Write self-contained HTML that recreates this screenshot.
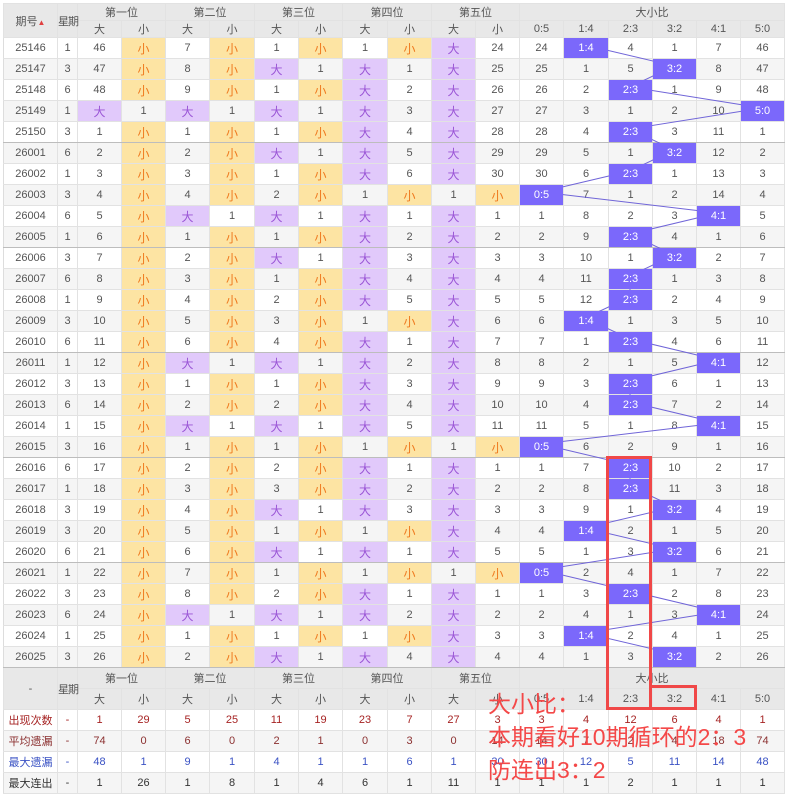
<!DOCTYPE html>
<html><head><meta charset="utf-8"><style>
body{margin:0;background:#fff;width:786px;height:793px;overflow:hidden;position:relative;font-family:"Liberation Sans","Noto Sans CJK SC",sans-serif;}
table{position:absolute;left:3px;top:3px;border-collapse:collapse;table-layout:fixed;width:781px;font-size:11px;color:#555;}
td{border:1px solid #e2e2e2;text-align:center;padding:0;height:20px;white-space:nowrap;overflow:hidden;}
td.wk{overflow:visible;letter-spacing:-1px;}
tr.h td{background:#e8e8e8;color:#555;}
tr.h1 td{height:16px;}
tr.h2 td{height:14px;}
tr.f1 td,tr.f2 td{height:20px;}
tr:nth-child(even).d td{background:#f5f5f5;}
tr.d td:nth-child(2),tr.d td:nth-child(3),tr.d td:nth-child(5),tr.d td:nth-child(7),tr.d td:nth-child(9),tr.d td:nth-child(11),tr.d td:nth-child(13){border-left:1px solid #c4c4c4;}
tr.d td:first-child{border-left:1px solid #ddd}
tr.g td{border-bottom:1px solid #bdbdbd;}
.gl{border-left:1px solid #c4c4c4!important;}
tr.d td.p{background:#e1c9fb!important;color:#9a55d6;font-size:12px;}
tr.d td.y{background:#fde4a3!important;color:#ef7a1f;font-size:12px;}
tr.d td.b{background:#7b68fb!important;color:#fff;position:relative;z-index:2;}
tr.s td{height:20px;}
.r1{color:#a62323}.r2{color:#8b3030}.r3{color:#3a52c4}.r4{color:#333}
svg{position:absolute;left:0;top:0;z-index:1;}
.box{position:absolute;border:3px solid #f04848;z-index:3;}
.note{position:absolute;left:488px;top:688px;color:#f44848;font-size:23px;line-height:33px;z-index:3;font-family:"Liberation Sans","Noto Sans CJK SC",sans-serif;}
</style></head><body>
<table>
<colgroup><col style="width:54px"><col style="width:20px"><col style="width:44px"><col style="width:44px"><col style="width:44px"><col style="width:45px"><col style="width:44px"><col style="width:44px"><col style="width:45px"><col style="width:44px"><col style="width:44px"><col style="width:44px"><col style="width:44px"><col style="width:45px"><col style="width:44px"><col style="width:44px"><col style="width:44px"><col style="width:44px"></colgroup>
<tr class="h h1"><td rowspan="2">期号<span style="color:#e04040;font-size:8px">▲</span></td><td rowspan="2" class="gl wk">星期</td><td colspan="2" class="gl">第一位</td><td colspan="2" class="gl">第二位</td><td colspan="2" class="gl">第三位</td><td colspan="2" class="gl">第四位</td><td colspan="2" class="gl">第五位</td><td colspan="6" class="gl">大小比</td></tr>
<tr class="h h2"><td class="gl">大</td><td>小</td><td class="gl">大</td><td>小</td><td class="gl">大</td><td>小</td><td class="gl">大</td><td>小</td><td class="gl">大</td><td>小</td><td class="gl">0:5</td><td>1:4</td><td>2:3</td><td>3:2</td><td>4:1</td><td>5:0</td></tr>
<tr class="d"><td>25146</td><td>1</td><td>46</td><td class="y">小</td><td>7</td><td class="y">小</td><td>1</td><td class="y">小</td><td>1</td><td class="y">小</td><td class="p">大</td><td>24</td><td>24</td><td class="b">1:4</td><td>4</td><td>1</td><td>7</td><td>46</td></tr>
<tr class="d"><td>25147</td><td>3</td><td>47</td><td class="y">小</td><td>8</td><td class="y">小</td><td class="p">大</td><td>1</td><td class="p">大</td><td>1</td><td class="p">大</td><td>25</td><td>25</td><td>1</td><td>5</td><td class="b">3:2</td><td>8</td><td>47</td></tr>
<tr class="d"><td>25148</td><td>6</td><td>48</td><td class="y">小</td><td>9</td><td class="y">小</td><td>1</td><td class="y">小</td><td class="p">大</td><td>2</td><td class="p">大</td><td>26</td><td>26</td><td>2</td><td class="b">2:3</td><td>1</td><td>9</td><td>48</td></tr>
<tr class="d"><td>25149</td><td>1</td><td class="p">大</td><td>1</td><td class="p">大</td><td>1</td><td class="p">大</td><td>1</td><td class="p">大</td><td>3</td><td class="p">大</td><td>27</td><td>27</td><td>3</td><td>1</td><td>2</td><td>10</td><td class="b">5:0</td></tr>
<tr class="d g"><td>25150</td><td>3</td><td>1</td><td class="y">小</td><td>1</td><td class="y">小</td><td>1</td><td class="y">小</td><td class="p">大</td><td>4</td><td class="p">大</td><td>28</td><td>28</td><td>4</td><td class="b">2:3</td><td>3</td><td>11</td><td>1</td></tr>
<tr class="d"><td>26001</td><td>6</td><td>2</td><td class="y">小</td><td>2</td><td class="y">小</td><td class="p">大</td><td>1</td><td class="p">大</td><td>5</td><td class="p">大</td><td>29</td><td>29</td><td>5</td><td>1</td><td class="b">3:2</td><td>12</td><td>2</td></tr>
<tr class="d"><td>26002</td><td>1</td><td>3</td><td class="y">小</td><td>3</td><td class="y">小</td><td>1</td><td class="y">小</td><td class="p">大</td><td>6</td><td class="p">大</td><td>30</td><td>30</td><td>6</td><td class="b">2:3</td><td>1</td><td>13</td><td>3</td></tr>
<tr class="d"><td>26003</td><td>3</td><td>4</td><td class="y">小</td><td>4</td><td class="y">小</td><td>2</td><td class="y">小</td><td>1</td><td class="y">小</td><td>1</td><td class="y">小</td><td class="b">0:5</td><td>7</td><td>1</td><td>2</td><td>14</td><td>4</td></tr>
<tr class="d"><td>26004</td><td>6</td><td>5</td><td class="y">小</td><td class="p">大</td><td>1</td><td class="p">大</td><td>1</td><td class="p">大</td><td>1</td><td class="p">大</td><td>1</td><td>1</td><td>8</td><td>2</td><td>3</td><td class="b">4:1</td><td>5</td></tr>
<tr class="d g"><td>26005</td><td>1</td><td>6</td><td class="y">小</td><td>1</td><td class="y">小</td><td>1</td><td class="y">小</td><td class="p">大</td><td>2</td><td class="p">大</td><td>2</td><td>2</td><td>9</td><td class="b">2:3</td><td>4</td><td>1</td><td>6</td></tr>
<tr class="d"><td>26006</td><td>3</td><td>7</td><td class="y">小</td><td>2</td><td class="y">小</td><td class="p">大</td><td>1</td><td class="p">大</td><td>3</td><td class="p">大</td><td>3</td><td>3</td><td>10</td><td>1</td><td class="b">3:2</td><td>2</td><td>7</td></tr>
<tr class="d"><td>26007</td><td>6</td><td>8</td><td class="y">小</td><td>3</td><td class="y">小</td><td>1</td><td class="y">小</td><td class="p">大</td><td>4</td><td class="p">大</td><td>4</td><td>4</td><td>11</td><td class="b">2:3</td><td>1</td><td>3</td><td>8</td></tr>
<tr class="d"><td>26008</td><td>1</td><td>9</td><td class="y">小</td><td>4</td><td class="y">小</td><td>2</td><td class="y">小</td><td class="p">大</td><td>5</td><td class="p">大</td><td>5</td><td>5</td><td>12</td><td class="b">2:3</td><td>2</td><td>4</td><td>9</td></tr>
<tr class="d"><td>26009</td><td>3</td><td>10</td><td class="y">小</td><td>5</td><td class="y">小</td><td>3</td><td class="y">小</td><td>1</td><td class="y">小</td><td class="p">大</td><td>6</td><td>6</td><td class="b">1:4</td><td>1</td><td>3</td><td>5</td><td>10</td></tr>
<tr class="d g"><td>26010</td><td>6</td><td>11</td><td class="y">小</td><td>6</td><td class="y">小</td><td>4</td><td class="y">小</td><td class="p">大</td><td>1</td><td class="p">大</td><td>7</td><td>7</td><td>1</td><td class="b">2:3</td><td>4</td><td>6</td><td>11</td></tr>
<tr class="d"><td>26011</td><td>1</td><td>12</td><td class="y">小</td><td class="p">大</td><td>1</td><td class="p">大</td><td>1</td><td class="p">大</td><td>2</td><td class="p">大</td><td>8</td><td>8</td><td>2</td><td>1</td><td>5</td><td class="b">4:1</td><td>12</td></tr>
<tr class="d"><td>26012</td><td>3</td><td>13</td><td class="y">小</td><td>1</td><td class="y">小</td><td>1</td><td class="y">小</td><td class="p">大</td><td>3</td><td class="p">大</td><td>9</td><td>9</td><td>3</td><td class="b">2:3</td><td>6</td><td>1</td><td>13</td></tr>
<tr class="d"><td>26013</td><td>6</td><td>14</td><td class="y">小</td><td>2</td><td class="y">小</td><td>2</td><td class="y">小</td><td class="p">大</td><td>4</td><td class="p">大</td><td>10</td><td>10</td><td>4</td><td class="b">2:3</td><td>7</td><td>2</td><td>14</td></tr>
<tr class="d"><td>26014</td><td>1</td><td>15</td><td class="y">小</td><td class="p">大</td><td>1</td><td class="p">大</td><td>1</td><td class="p">大</td><td>5</td><td class="p">大</td><td>11</td><td>11</td><td>5</td><td>1</td><td>8</td><td class="b">4:1</td><td>15</td></tr>
<tr class="d g"><td>26015</td><td>3</td><td>16</td><td class="y">小</td><td>1</td><td class="y">小</td><td>1</td><td class="y">小</td><td>1</td><td class="y">小</td><td>1</td><td class="y">小</td><td class="b">0:5</td><td>6</td><td>2</td><td>9</td><td>1</td><td>16</td></tr>
<tr class="d"><td>26016</td><td>6</td><td>17</td><td class="y">小</td><td>2</td><td class="y">小</td><td>2</td><td class="y">小</td><td class="p">大</td><td>1</td><td class="p">大</td><td>1</td><td>1</td><td>7</td><td class="b">2:3</td><td>10</td><td>2</td><td>17</td></tr>
<tr class="d"><td>26017</td><td>1</td><td>18</td><td class="y">小</td><td>3</td><td class="y">小</td><td>3</td><td class="y">小</td><td class="p">大</td><td>2</td><td class="p">大</td><td>2</td><td>2</td><td>8</td><td class="b">2:3</td><td>11</td><td>3</td><td>18</td></tr>
<tr class="d"><td>26018</td><td>3</td><td>19</td><td class="y">小</td><td>4</td><td class="y">小</td><td class="p">大</td><td>1</td><td class="p">大</td><td>3</td><td class="p">大</td><td>3</td><td>3</td><td>9</td><td>1</td><td class="b">3:2</td><td>4</td><td>19</td></tr>
<tr class="d"><td>26019</td><td>3</td><td>20</td><td class="y">小</td><td>5</td><td class="y">小</td><td>1</td><td class="y">小</td><td>1</td><td class="y">小</td><td class="p">大</td><td>4</td><td>4</td><td class="b">1:4</td><td>2</td><td>1</td><td>5</td><td>20</td></tr>
<tr class="d g"><td>26020</td><td>6</td><td>21</td><td class="y">小</td><td>6</td><td class="y">小</td><td class="p">大</td><td>1</td><td class="p">大</td><td>1</td><td class="p">大</td><td>5</td><td>5</td><td>1</td><td>3</td><td class="b">3:2</td><td>6</td><td>21</td></tr>
<tr class="d"><td>26021</td><td>1</td><td>22</td><td class="y">小</td><td>7</td><td class="y">小</td><td>1</td><td class="y">小</td><td>1</td><td class="y">小</td><td>1</td><td class="y">小</td><td class="b">0:5</td><td>2</td><td>4</td><td>1</td><td>7</td><td>22</td></tr>
<tr class="d"><td>26022</td><td>3</td><td>23</td><td class="y">小</td><td>8</td><td class="y">小</td><td>2</td><td class="y">小</td><td class="p">大</td><td>1</td><td class="p">大</td><td>1</td><td>1</td><td>3</td><td class="b">2:3</td><td>2</td><td>8</td><td>23</td></tr>
<tr class="d"><td>26023</td><td>6</td><td>24</td><td class="y">小</td><td class="p">大</td><td>1</td><td class="p">大</td><td>1</td><td class="p">大</td><td>2</td><td class="p">大</td><td>2</td><td>2</td><td>4</td><td>1</td><td>3</td><td class="b">4:1</td><td>24</td></tr>
<tr class="d"><td>26024</td><td>1</td><td>25</td><td class="y">小</td><td>1</td><td class="y">小</td><td>1</td><td class="y">小</td><td>1</td><td class="y">小</td><td class="p">大</td><td>3</td><td>3</td><td class="b">1:4</td><td>2</td><td>4</td><td>1</td><td>25</td></tr>
<tr class="d g"><td>26025</td><td>3</td><td>26</td><td class="y">小</td><td>2</td><td class="y">小</td><td class="p">大</td><td>1</td><td class="p">大</td><td>4</td><td class="p">大</td><td>4</td><td>4</td><td>1</td><td>3</td><td class="b">3:2</td><td>2</td><td>26</td></tr>
<tr class="h f1"><td rowspan="2">-</td><td rowspan="2" class="gl wk">星期</td><td colspan="2" class="gl">第一位</td><td colspan="2" class="gl">第二位</td><td colspan="2" class="gl">第三位</td><td colspan="2" class="gl">第四位</td><td colspan="2" class="gl">第五位</td><td colspan="6" class="gl">大小比</td></tr>
<tr class="h f2"><td class="gl">大</td><td>小</td><td class="gl">大</td><td>小</td><td class="gl">大</td><td>小</td><td class="gl">大</td><td>小</td><td class="gl">大</td><td>小</td><td class="gl">0:5</td><td>1:4</td><td>2:3</td><td>3:2</td><td>4:1</td><td>5:0</td></tr>
<tr class="d s r1"><td>出现次数</td><td>-</td><td>1</td><td>29</td><td>5</td><td>25</td><td>11</td><td>19</td><td>23</td><td>7</td><td>27</td><td>3</td><td>3</td><td>4</td><td>12</td><td>6</td><td>4</td><td>1</td></tr>
<tr class="d s r2"><td>平均遗漏</td><td>-</td><td>74</td><td>0</td><td>6</td><td>0</td><td>2</td><td>1</td><td>0</td><td>3</td><td>0</td><td>14</td><td>14</td><td>7</td><td>2</td><td>4</td><td>18</td><td>74</td></tr>
<tr class="d s r3"><td>最大遗漏</td><td>-</td><td>48</td><td>1</td><td>9</td><td>1</td><td>4</td><td>1</td><td>1</td><td>6</td><td>1</td><td>30</td><td>30</td><td>12</td><td>5</td><td>11</td><td>14</td><td>48</td></tr>
<tr class="d s r4"><td>最大连出</td><td>-</td><td>1</td><td>26</td><td>1</td><td>8</td><td>1</td><td>4</td><td>6</td><td>1</td><td>11</td><td>1</td><td>1</td><td>1</td><td>2</td><td>1</td><td>1</td><td>1</td></tr>
</table>
<svg width="786" height="793"><polyline fill="none" stroke="#7065d8" stroke-width="1" points="585,45 674,66 630,87 762,108 630,129 674,150 630,171 541,192 718,213 630,234 674,255 630,276 630,297 585,318 630,339 718,360 630,381 630,402 718,423 541,444 630,465 630,486 674,507 585,528 674,549 541,570 630,591 718,612 585,633 674,654"/></svg>
<div class="box" style="left:606px;top:456px;width:40px;height:248px"></div>
<div class="box" style="left:649px;top:685px;width:42px;height:19px"></div>
<div class="note">大小比：<br>本期看好10期循环的2：3<br>防连出3：2</div>
</body></html>
